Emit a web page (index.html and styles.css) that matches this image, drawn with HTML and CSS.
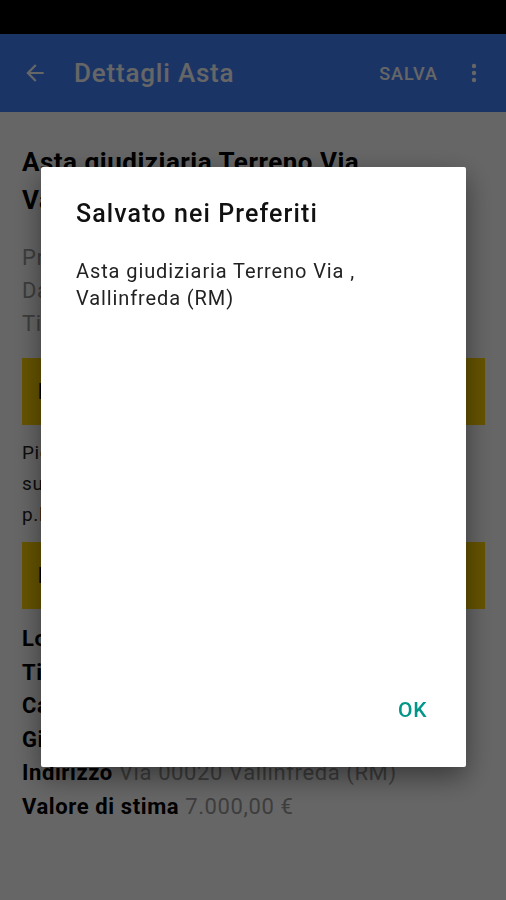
FILE: index.html
```html
<!DOCTYPE html>
<html lang="it">
<head>
    <meta charset="UTF-8">
    <meta name="viewport" content="width=device-width, initial-scale=1.0">
    <title>Dettagli Asta</title>
    <link rel="stylesheet" href="styles.css">
</head>
<body>
    <div class="status-bar"></div>

    <header class="app-bar">
        <svg class="back-icon" viewBox="0 0 24 24" width="26" height="26">
            <path d="M20 11H7.83l5.59-5.59L12 4l-8 8 8 8 1.41-1.41L7.83 13H20v-2z" fill="#fff"/>
        </svg>
        <div class="app-title">Dettagli Asta</div>
        <div class="app-action">SALVA</div>
        <svg class="more-icon" viewBox="0 0 24 24" width="24" height="24">
            <circle cx="12" cy="5" r="2.2" fill="#fff"/>
            <circle cx="12" cy="12" r="2.2" fill="#fff"/>
            <circle cx="12" cy="19" r="2.2" fill="#fff"/>
        </svg>
    </header>

    <main class="content">
        <h1 class="auction-title">Asta giudiziaria Terreno Via , Vallinfreda (RM)</h1>

        <div class="meta">
            <div>Procedura n. 123/2016</div>
            <div>Data asta 12/04/2018</div>
            <div>Tipo vendita senza incanto</div>
        </div>

        <div class="section-head">Descrizione</div>

        <p class="description">
            Piena proprietà di terreno agricolo in Vallinfreda,<br>
            superficie catastale circa 2.500 mq, foglio 5<br>
            p.lla 210.
        </p>

        <div class="section-head">Dettagli</div>

        <div class="facts">
            <div><b>Lotto</b> <span>Unico</span></div>
            <div><b>Tipologia</b> <span>Terreno</span></div>
            <div><b>Categoria</b> <span>Agricolo</span></div>
            <div><b>Giudice</b> <span>Dott. Rossi</span></div>
            <div><b>Indirizzo</b> <span>Via 00020 Vallinfreda (RM)</span></div>
            <div><b>Valore di stima</b> <span>7.000,00 €</span></div>
        </div>
    </main>

    <!-- dialogo sopra la pagina -->
    <div class="scrim">
        <div class="dialog">
            <div class="dialog-title">Salvato nei Preferiti</div>
            <div class="dialog-body">Asta giudiziaria Terreno Via , Vallinfreda (RM)</div>
            <div class="dialog-actions">
                <span class="dialog-ok">OK</span>
            </div>
        </div>
    </div>
</body>
</html>
```

FILE: styles.css
```css
body {
    margin: 0;
    padding: 0;
    width: 506px;
    height: 900px;
    overflow: hidden;
    background: #fff;
    font-family: 'Roboto', 'Noto Sans', sans-serif;
    color: #000;
}
.status-bar {
    height: 34px;
    background: #000;
}
.app-bar {
    height: 78px;
    background: #4583ff;
    display: flex;
    align-items: center;
    padding: 0 20px 0 22px;
    color: #fff;
}
.back-icon {
    flex: none;
}
.app-title {
    flex: 1;
    margin-left: 26px;
    font-size: 26px;
    font-weight: 500;
    letter-spacing: 0.8px;
}
.app-action {
    font-size: 18px;
    font-weight: 500;
    letter-spacing: 1px;
    margin-right: 24px;
}
.more-icon {
    flex: none;
}
.content {
    padding: 31px 21px 0 22px;
}
.auction-title {
    margin: 0;
    font-size: 26px;
    font-weight: 700;
    line-height: 38px;
    letter-spacing: 0.5px;
}
.meta {
    margin-top: 22px;
    font-size: 22px;
    line-height: 33px;
    letter-spacing: 0.6px;
    color: #9a9a9a;
}
.section-head {
    margin-top: 18px;
    height: 67px;
    background: #ffd200;
    display: flex;
    align-items: center;
    padding-left: 16px;
    font-size: 22px;
    font-weight: 700;
}
.description {
    margin: 12px 0 12px;
    font-size: 19px;
    line-height: 31px;
    letter-spacing: 0.6px;
    color: #222;
}
.description + .section-head {
    margin-top: 0;
}
.facts {
    margin-top: 13px;
    font-size: 22px;
    line-height: 33.5px;
    letter-spacing: 0.6px;
}
.facts b {
    font-weight: 700;
}
.facts span {
    color: #9a9a9a;
}
.scrim {
    position: fixed;
    top: 0;
    left: 0;
    right: 0;
    bottom: 0;
    background: rgba(0, 0, 0, 0.6);
    padding: 167px 40px 0 41px;
}
.dialog {
    height: 600px;
    background: #fff;
    border-radius: 2px;
    box-shadow: 0 10px 28px rgba(0, 0, 0, 0.45);
    display: flex;
    flex-direction: column;
    padding: 32px 39px 0 35px;
    box-sizing: border-box;
}
.dialog-title {
    font-size: 25px;
    line-height: 30px;
    font-weight: 500;
    letter-spacing: 1.1px;
    color: #111;
}
.dialog-body {
    flex: 1;
    margin-top: 29px;
    font-size: 20px;
    line-height: 27px;
    letter-spacing: 0.9px;
    color: #222;
}
.dialog-actions {
    display: flex;
    justify-content: flex-end;
    padding-bottom: 44px;
}
.dialog-ok {
    color: #009688;
    font-size: 21px;
    font-weight: 500;
    letter-spacing: 0.6px;
    line-height: 26px;
}
```
